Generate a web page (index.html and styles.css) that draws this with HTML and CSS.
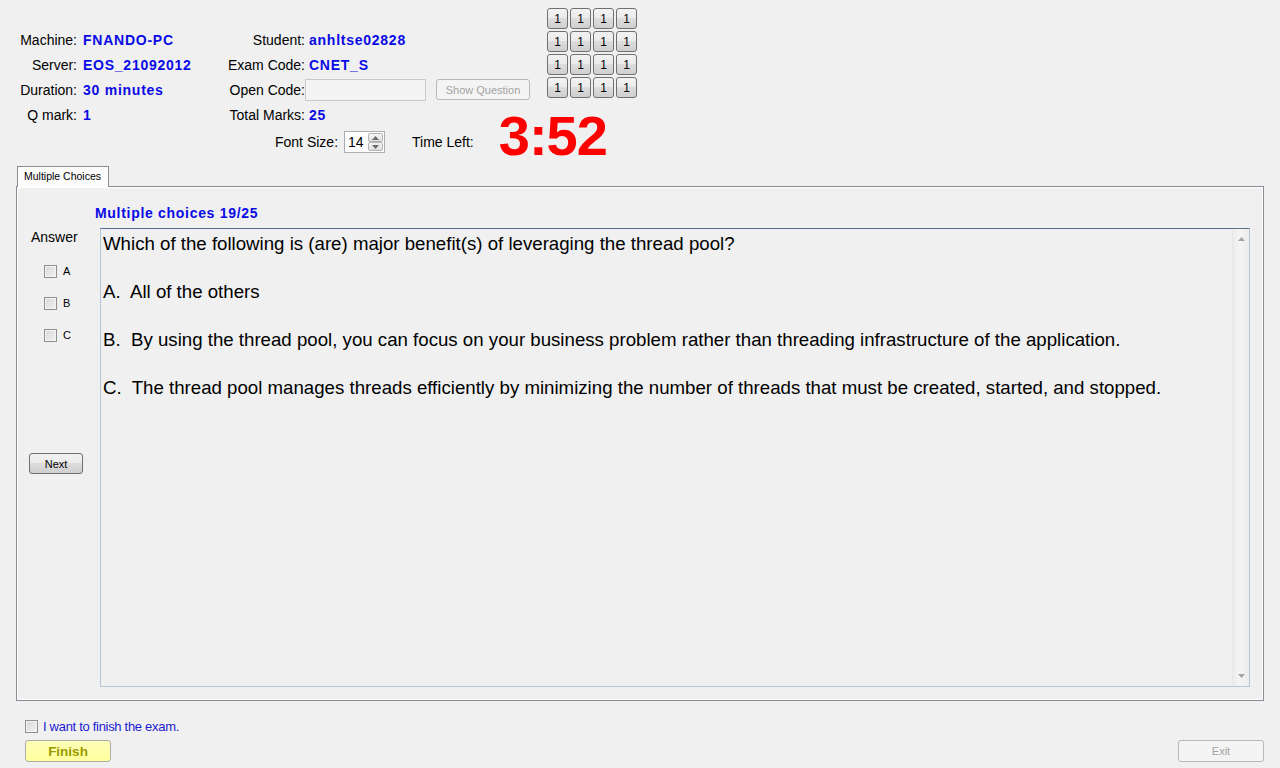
FILE: index.html
```html
<!DOCTYPE html>
<html>
<head>
<meta charset="utf-8">
<link rel="stylesheet" href="styles.css">
</head>
<body>
<div class="app">
  <div class="header">
    <div class="upper">
      <div class="info">
        <div class="lbl">Machine:</div><div class="val v1">FNANDO-PC</div>
        <div class="lbl">Student:</div><div class="val v2">anhltse02828</div>
        <div class="lbl">Server:</div><div class="val v1">EOS_21092012</div>
        <div class="lbl">Exam Code:</div><div class="val v2">CNET_S</div>
        <div class="lbl">Duration:</div><div class="val v1">30 minutes</div>
        <div class="lbl">Open Code:</div>
        <div class="opencell"><div class="textbox"></div><div class="btn disabled showq">Show Question</div></div>
        <div class="lbl">Q mark:</div><div class="val v1">1</div>
        <div class="lbl">Total Marks:</div><div class="val v2">25</div>
      </div>
      <div class="qgrid">
        <div class="qb">1</div><div class="qb">1</div><div class="qb">1</div><div class="qb">1</div>
        <div class="qb">1</div><div class="qb">1</div><div class="qb">1</div><div class="qb">1</div>
        <div class="qb">1</div><div class="qb">1</div><div class="qb">1</div><div class="qb">1</div>
        <div class="qb">1</div><div class="qb">1</div><div class="qb">1</div><div class="qb">1</div>
      </div>
    </div>
    <div class="lower">
      <div class="fslabel">Font Size:</div>
      <div class="spinner">
        <div class="spinval">14</div>
        <div class="spinbtns">
          <div class="spinbtn"><svg width="7" height="4" viewBox="0 0 7 4"><path d="M0 4 L3.5 0 L7 4 Z" fill="#6a6a6a"/></svg></div>
          <div class="spinbtn"><svg width="7" height="4" viewBox="0 0 7 4"><path d="M0 0 L3.5 4 L7 0 Z" fill="#6a6a6a"/></svg></div>
        </div>
      </div>
      <div class="tllabel">Time Left:</div>
      <div class="timer">3:52</div>
    </div>
  </div>

  <div class="tabs">
    <div class="tabhead"><div class="tab">Multiple Choices</div></div>
    <div class="tabpage">
      <div class="qtitle">Multiple choices 19/25</div>
      <div class="qmain">
        <div class="answers">
          <div class="anslabel">Answer</div>
          <div class="choices">
            <div class="choice"><span class="cb"></span><span class="cl">A</span></div>
            <div class="choice"><span class="cb"></span><span class="cl">B</span></div>
            <div class="choice"><span class="cb"></span><span class="cl">C</span></div>
          </div>
          <div class="btn next">Next</div>
        </div>
        <div class="qbox">
          <div class="qtext">
            <p>Which of the following is (are) major benefit(s) of leveraging the thread pool?</p>
            <p>A.&nbsp; All of the others</p>
            <p>B.&nbsp; By using the thread pool, you can focus on your business problem rather than threading infrastructure of the application.</p>
            <p>C.&nbsp; The thread pool manages threads efficiently by minimizing the number of threads that must be created, started, and stopped.</p>
          </div>
          <div class="scroll">
            <svg width="7" height="4" viewBox="0 0 7 4"><path d="M0 4 L3.5 0 L7 4 Z" fill="#a3a3a3"/></svg>
            <svg width="7" height="4" viewBox="0 0 7 4"><path d="M0 0 L3.5 4 L7 0 Z" fill="#a3a3a3"/></svg>
          </div>
        </div>
      </div>
    </div>
  </div>

  <div class="footer">
    <div class="finishcol">
      <div class="finishrow"><span class="cb"></span><span class="finishlbl">I want to finish the exam.</span></div>
      <div class="btn finish">Finish</div>
    </div>
    <div class="btn disabled exit">Exit</div>
  </div>
</div>
</body>
</html>
```
FILE: styles.css
```css
* { box-sizing: border-box; }
html, body { margin: 0; padding: 0; }
body {
  width: 1280px;
  height: 768px;
  overflow: hidden;
  background: #f0f0f0;
  font-family: "Liberation Sans", Arial, sans-serif;
  font-size: 14px;
  color: #000;
}
.app { display: flex; flex-direction: column; height: 768px; }

/* header */
.header { display: flex; flex-direction: column; }
.upper { display: flex; align-items: flex-start; height: 128px; }
.info {
  margin-top: 27px;
  display: grid;
  grid-template-columns: 77px 145px 83px auto;
  grid-auto-rows: 25px;
  align-items: center;
}
.lbl { text-align: right; white-space: nowrap; line-height: 16px; }
.val { font-weight: bold; color: #0a0ae6; letter-spacing: 0.75px; line-height: 16px; white-space: nowrap; }
.v1 { padding-left: 6px; }
.v2 { padding-left: 4px; }
.opencell { display: flex; align-items: center; gap: 10px; }
.textbox {
  width: 121px; height: 22px;
  border: 1px solid #c9c9c9;
  background: #f4f4f4;
}
.btn {
  display: flex; align-items: center; justify-content: center;
  border: 1px solid #707070;
  border-radius: 3px;
  background: linear-gradient(#f2f2f2 0%, #ebebeb 45%, #dddddd 50%, #cfcfcf 100%);
  font-size: 11px;
  color: #000;
}
.btn.disabled {
  border-color: #b6b9bc;
  background: #f4f4f4;
  color: #a3a3a3;
}
.showq { width: 94px; height: 21px; }

.qgrid {
  margin-left: 17px;
  margin-top: 8px;
  display: grid;
  grid-template-columns: repeat(4, 21px);
  grid-auto-rows: 21px;
  gap: 2px;
}
.qb {
  display: flex; align-items: center; justify-content: center;
  border: 1px solid #707070;
  border-radius: 3px;
  background: linear-gradient(#f2f2f2 0%, #ebebeb 45%, #dddddd 50%, #cfcfcf 100%);
  font-size: 12px;
}

.lower { display: flex; align-items: center; height: 28px; padding-left: 275px; }
.fslabel { white-space: nowrap; }
.spinner {
  margin-left: 6px;
  width: 41px; height: 22px;
  border: 1px solid #abadb3;
  background: #fff;
  display: flex;
}
.spinval { flex: 1; padding-left: 3px; line-height: 20px; font-size: 14px; }
.spinbtns { width: 16px; display: flex; flex-direction: column; padding: 1px 1px 1px 0; gap: 0; }
.spinbtn {
  flex: 1;
  display: flex; align-items: center; justify-content: center;
  border: 1px solid #b4b4b4;
  border-radius: 2px;
  background: linear-gradient(#f6f6f6, #dedede);
}
.tllabel { margin-left: 27px; white-space: nowrap; }
.timer {
  margin-left: 25px;
  font-size: 56px;
  font-weight: bold;
  color: #ff0000;
  line-height: 28px;
  margin-bottom: 12px;
  letter-spacing: -1px;
}

/* tabs */
.tabs { margin: 10px 16px 0 16px; display: flex; flex-direction: column; }
.tabhead { display: flex; height: 21px; padding-left: 1px; position: relative; z-index: 1; margin-bottom: -1px; }
.tab {
  width: 92px;
  height: 21px;
  border: 1px solid #898c95;
  border-bottom: none;
  background: #fcfcfc;
  font-size: 10.5px;
  line-height: 19px;
  padding-left: 6px;
  white-space: nowrap;
}
.tabpage {
  height: 515px;
  border: 1px solid #898c95;
  box-shadow: inset 1px 1px 0 #ffffff, inset -1px -1px 0 #ffffff;
  background: #f0f0f0;
  display: flex;
  flex-direction: column;
}
.qtitle {
  height: 41px;
  padding-top: 17px;
  padding-left: 78px;
  font-weight: bold;
  color: #0a0ae6;
  letter-spacing: 0.7px;
  line-height: 18px;
  white-space: nowrap;
}
.qmain { display: flex; flex: 1; margin-bottom: 13px; margin-right: 13px; }
.answers { width: 83px; display: flex; flex-direction: column; }
.anslabel { padding-left: 14px; line-height: 18px; }
.choices { margin-top: 9px; display: flex; flex-direction: column; }
.choice { height: 32px; display: flex; align-items: center; padding-left: 27px; }
.cb {
  display: inline-block;
  width: 13px; height: 13px;
  border: 1px solid #8e8f8f;
  background: linear-gradient(135deg, #d8d8d8, #f2f2f2);
  box-shadow: inset 0 0 0 1px #f4f4f4;
}
.cl { margin-left: 6px; font-size: 11px; }
.next { margin-top: 102px; margin-left: 12px; width: 54px; height: 21px; }

.qbox {
  flex: 1;
  display: flex;
  border: 1px solid #b7c6d6;
  border-top-color: #5c6f8e;
  box-shadow: inset 0 1px 0 #e6eef8;
  background: #f0f0f0;
}
.qtext {
  flex: 1;
  padding: 3px 0 0 2px;
  font-size: 18.67px;
  line-height: 24px;
}
.qtext p { margin: 0 0 24px 0; white-space: nowrap; }
.scroll {
  width: 17px;
  display: flex;
  flex-direction: column;
  justify-content: space-between;
  align-items: center;
  padding: 8px 0 8px 0;
  border-left: 1px solid #e8e8e8;
  background: linear-gradient(90deg, #ececec, #f4f4f4 40%, #ececec);
}

/* footer */
.footer { display: flex; align-items: flex-end; padding: 0 16px 6px 25px; flex: 1; }
.finishcol { display: flex; flex-direction: column; }
.finishrow { display: flex; align-items: center; height: 13px; }
.finishlbl { margin-left: 5px; color: #1a1ad0; font-size: 13px; letter-spacing: -0.3px; white-space: nowrap; }
.finish {
  margin-top: 7px;
  width: 86px; height: 22px;
  border-color: #acacac;
  background: linear-gradient(#ffffb8, #ffff9c);
  color: #9a9a00;
  font-weight: bold;
  font-size: 13.5px;
}
.exit { margin-left: auto; width: 86px; height: 22px; }
```
